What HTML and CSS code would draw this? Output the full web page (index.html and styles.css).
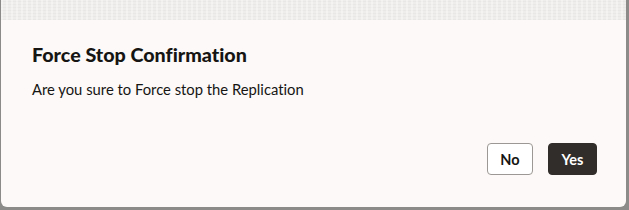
FILE: index.html
```html
<!DOCTYPE html>
<html>
<head>
<meta charset="utf-8">
<link rel="stylesheet" href="styles.css">
</head>
<body>
<div class="dialog">
  <div class="dialog-band"></div>
  <div class="dialog-body">
    <h1 class="dialog-title">Force Stop Confirmation</h1>
    <p class="dialog-text">Are you sure to Force stop the Replication</p>
  </div>
  <div class="dialog-footer">
    <button class="btn btn-outline">No</button>
    <button class="btn btn-solid">Yes</button>
  </div>
</div>
</body>
</html>
```
FILE: styles.css
```css
html, body {
  margin: 0;
  padding: 0;
  width: 629px;
  height: 210px;
  overflow: hidden;
  background: #8d8b89;
  font-family: "Lato", "Noto Sans", "Liberation Sans", sans-serif;
  font-variant-ligatures: none;
}
.dialog {
  margin-left: 1px;
  width: 625px;
  height: 207px;
  background: #fcf9f8;
  border-radius: 0 0 6px 6px;
  display: flex;
  flex-direction: column;
  box-sizing: border-box;
}
.dialog-band {
  height: 20px;
  background-color: #efedeb;
  background-image:
    repeating-linear-gradient(90deg, rgba(255,255,255,0.35) 0 2px, transparent 2px 5px),
    repeating-linear-gradient(0deg, rgba(0,0,0,0.025) 0 1px, transparent 1px 3px);
}
.dialog-body {
  padding: 22px 31px 0;
}
.dialog-title {
  margin: 0;
  font-size: 19.7px;
  font-weight: 900;
  line-height: 26px;
  color: #161513;
}
.dialog-text {
  margin: 11px 0 0;
  font-size: 14.8px;
  line-height: 20px;
  color: #161513;
}
.dialog-footer {
  margin-top: auto;
  display: flex;
  justify-content: flex-end;
  gap: 15px;
  padding: 0 29px 32px;
}
.btn {
  height: 32px;
  box-sizing: border-box;
  border-radius: 4px;
  font-family: inherit;
  font-size: 14.5px;
  font-weight: 700;
  padding: 0;
  text-align: center;
  cursor: pointer;
}
.btn-outline {
  background: #ffffff;
  border: 1px solid #9b9895;
  color: #161513;
  width: 46px;
}
.btn-solid {
  background: #312d2a;
  border: 1px solid #312d2a;
  color: #ffffff;
  width: 49px;
}
```
